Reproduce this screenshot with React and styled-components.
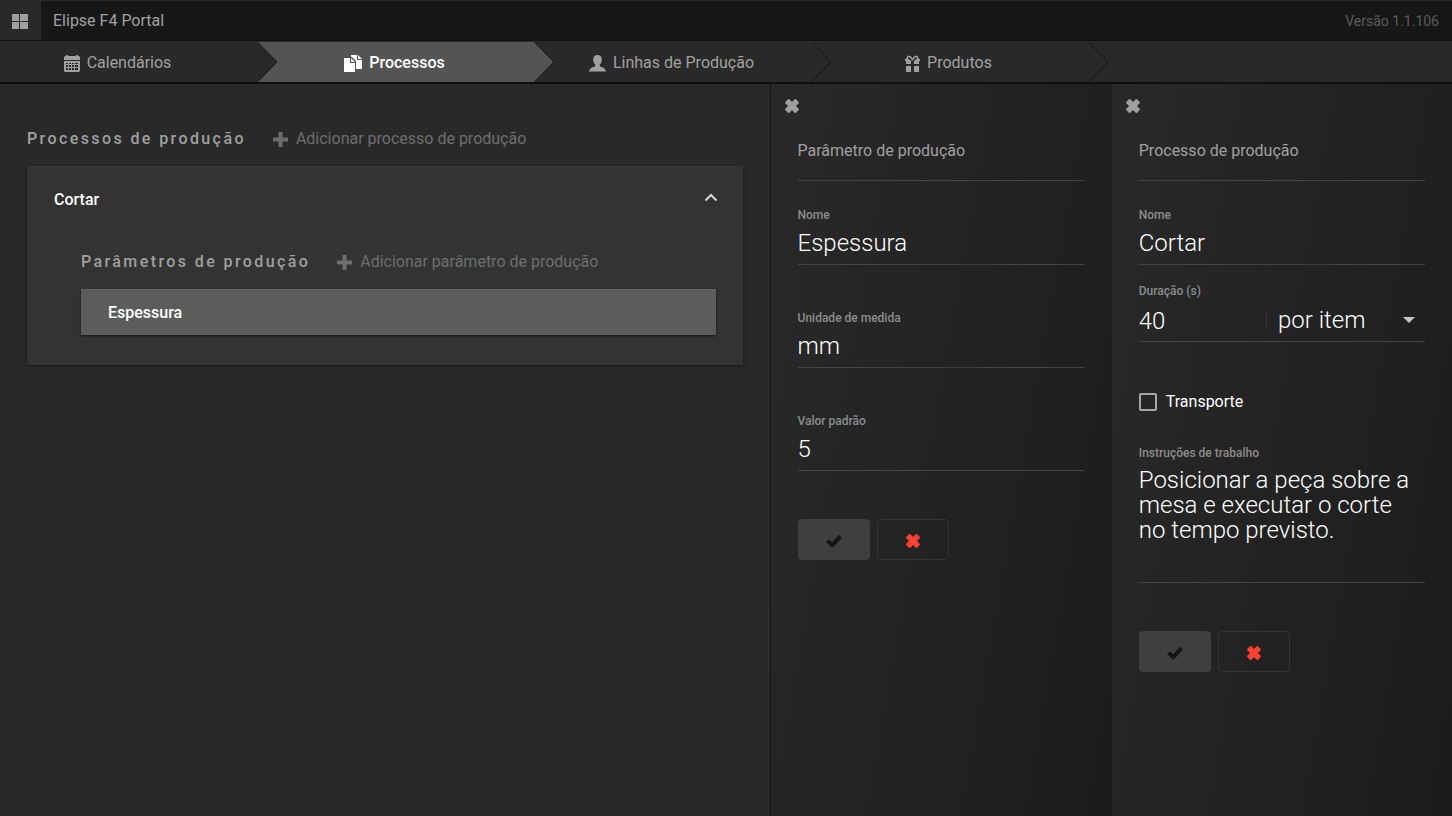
import { useState } from "react";
import styled, { createGlobalStyle } from "styled-components";

const GlobalStyle = createGlobalStyle`
  *,
  *::before,
  *::after {
    box-sizing: border-box;
  }

  body {
    margin: 0;
    background: #292929;
    color: #a0a0a0;
    font-family: Roboto, "Liberation Sans", sans-serif;
    font-size: 16px;
    line-height: 24px;
  }

  button,
  input,
  select,
  textarea {
    font-family: inherit;
    color: inherit;
    margin: 0;
    padding: 0;
    border: 0;
    border-radius: 0;
    background: none;
    outline: none;
  }

  button {
    cursor: pointer;
  }
`;

const Page = styled.div`
  display: flex;
  flex-direction: column;
  min-height: 100vh;
`;

const TopBar = styled.header`
  display: flex;
  align-items: center;
  height: 41px;
  background: #171717;
  border-top: 1px solid #2a2a2a;
  border-bottom: 1px solid #0e0e0e;

  h1 {
    flex: 1;
    margin: 0 0 0 12px;
    font-size: 16px;
    font-weight: 400;
  }
`;

const MenuButton = styled.button`
  display: flex;
  align-items: center;
  justify-content: center;
  align-self: stretch;
  width: 41px;
  padding: 2px 2px 0 0;
  background: #292929;
  color: #a0a0a0;
`;

const Version = styled.span`
  margin-right: 13px;
  color: #5c5c5c;
  font-size: 14px;
`;

const Nav = styled.nav`
  display: flex;
  height: 43px;
  padding-right: 20px;
  overflow: hidden;
  background: #292929;
  border-top: 1px solid #2e2e2e;
  border-bottom: 2px solid #0e0e0e;
`;

const Tab = styled.a`
  position: relative;
  display: flex;
  flex: 0 0 277px;
  align-items: center;
  justify-content: center;
  gap: 7px;
  padding: 2px 2px 0 0;
  background: ${({ $active }) => ($active ? "#545454" : "#292929")};
  color: ${({ $active }) => ($active ? "#ffffff" : "#a0a0a0")};
  font-weight: ${({ $active }) => ($active ? 500 : 400)};
  text-decoration: none;

  &:first-child {
    margin-left: -20px;
  }
`;

const Arrow = styled.svg`
  position: absolute;
  z-index: 1;
  top: 0;
  left: 100%;
  fill: ${({ $active }) => ($active ? "#545454" : "#292929")};
  stroke: #141414;
`;

const Main = styled.main`
  display: grid;
  flex: 1;
  grid-template-columns: 106fr 47fr 47fr;
`;

const Processes = styled.section`
  padding: 43px 27px 27px;
`;

const ListHeader = styled.div`
  display: flex;
  align-items: center;
  gap: 27px;
  margin-bottom: 15px;

  h2 {
    margin: 0;
    font-size: 16px;
    font-weight: 500;
    letter-spacing: 0.15em;
  }
`;

const AddButton = styled.button`
  display: flex;
  align-items: center;
  gap: 8px;
  color: #6e6e6e;
  font-size: 16px;
  line-height: 24px;
`;

const Card = styled.article`
  background: #333333;
  border-top: 1px solid #393939;
  box-shadow: 0 1px 2px #151515;
`;

const CardHeader = styled.button`
  display: flex;
  align-items: center;
  justify-content: space-between;
  width: 100%;
  height: 64px;
  padding: 0 25px 0 27px;
  color: #ffffff;
  font-size: 16px;
  font-weight: 500;
`;

const Parameters = styled.div`
  padding: 19px 27px 30px 54px;
`;

const ParameterRow = styled.button`
  display: block;
  width: 100%;
  height: 46px;
  padding: 0 27px;
  background: #5c5c5c;
  border-top: 1px solid #646464;
  box-shadow: 0 1px 2px #151515;
  color: #ffffff;
  font-size: 16px;
  font-weight: 500;
  text-align: left;
`;

const Panel = styled.form`
  min-width: 0;
  padding: 15px 27px 27px;
  background: linear-gradient(100deg, #292929, #1c1c1c);
  border-left: 1px solid ${({ $divided }) => ($divided ? "#141414" : "transparent")};

  h2 {
    margin: 26px 0;
    padding-bottom: 17px;
    border-bottom: 1px solid #444444;
    font-size: 16px;
    font-weight: 400;
  }
`;

const CloseButton = styled.button`
  display: block;
  margin-left: -13px;
  color: #a0a0a0;
  line-height: 0;
`;

const Field = styled.div`
  display: flex;
  flex-direction: column;
  margin-bottom: ${({ $gap }) => $gap || 45}px;

  label {
    color: #8c8c8c;
    font-size: 12px;
    font-weight: 500;
    line-height: 16px;
  }
`;

const TextInput = styled.input`
  width: 100%;
  min-width: 0;
  height: 42px;
  padding-bottom: 1px;
  border-bottom: 1px solid #444444;
  color: #ffffff;
  font-size: 24px;
  font-weight: 300;
`;

const TextArea = styled.textarea`
  height: 122px;
  padding: 7px 8px 0 0;
  border-bottom: 1px solid #444444;
  color: #ffffff;
  font-size: 24px;
  font-weight: 300;
  line-height: 25px;
  resize: none;
  overflow: hidden;
`;

const Duration = styled.div`
  display: grid;
  grid-template-columns: 4fr 5fr;
  align-items: center;
  height: 43px;
  padding-top: 2px;
  border-bottom: 1px solid #444444;

  ${TextInput} {
    height: 40px;
    border-bottom: 0;
  }
`;

const UnitSelect = styled.div`
  position: relative;
  height: 20px;
  border-left: 1px solid #333333;

  select {
    width: 100%;
    height: 32px;
    margin-top: -7px;
    padding-left: 11px;
    appearance: none;
    color: #ffffff;
    font-size: 24px;
    font-weight: 300;
  }

  option {
    background: #292929;
  }

  svg {
    position: absolute;
    top: 6px;
    right: 10px;
    pointer-events: none;
  }
`;

const Checkbox = styled.label`
  display: flex;
  align-items: center;
  gap: 9px;
  margin-bottom: 31px;
  color: #ffffff;

  input {
    width: 18px;
    height: 18px;
    appearance: none;
    border: 2px solid #a6a6a6;
    border-radius: 2px;
  }

  input:checked {
    background: #a6a6a6;
  }
`;

const Actions = styled.div`
  display: flex;
  gap: 7px;
  margin-top: 48px;
`;

const ActionButton = styled.button`
  display: flex;
  align-items: center;
  justify-content: center;
  width: 72px;
  height: 41px;
  padding-top: 3px;
  background: ${({ $filled }) => ($filled ? "#3f3f3f" : "transparent")};
  border: 1px solid ${({ $filled }) => ($filled ? "#3f3f3f" : "#343434")};
  border-radius: 4px;
  color: ${({ $filled }) => ($filled ? "#141414" : "#ff4032")};
`;

const GridIcon = () => (
  <svg width="16" height="16" fill="currentColor" aria-hidden="true">
    <path d="M0 0h7v7H0zM8 0h8v7H8zM0 8h7v7H0zM8 8h8v7H8z" />
  </svg>
);

const CalendarIcon = () => (
  <svg width="16" height="17" viewBox="0 0 16 17" fill="currentColor" aria-hidden="true">
    <path d="M1 1h1V0h2v1h8V0h2v1h1l1 1v3H0V2z" />
    <path
      fillRule="evenodd"
      d="M0 6h16v10l-1 1H1l-1-1zM2 8v1h2V8zM5 8v1h2V8zM8 8v1h2V8zM11 8v1h3V8zM2 10v2h2v-2zM5 10v2h2v-2zM8 10v2h2v-2zM11 10v2h3v-2zM2 13v2h2v-2zM5 13v2h2v-2zM8 13v2h2v-2zM11 13v2h3v-2z"
    />
  </svg>
);

const FilesIcon = () => (
  <svg width="18" height="17" viewBox="0 0 18 17" fill="currentColor" aria-hidden="true">
    <path d="M0 3h6v5h5v9H0z" />
    <path d="M7 3l4 4H7z" />
    <path d="M7 0h6v5h5v9h-6V6L8 2H7z" />
    <path d="M14 0l4 4h-4z" />
  </svg>
);

const UserIcon = () => (
  <svg width="17" height="17" viewBox="0 0 17 17" fill="currentColor" aria-hidden="true">
    <path d="M8.500 0C11 0 12.800 1.500 12.800 4.200c0 2.300-.8 4.300-2 5.400v1.600c2.700 1 5.700 2 6.200 5.300H0c.5-3.300 3.500-4.300 6.200-5.300V9.600c-1.200-1.100-2-3.100-2-5.400C4.200 1.500 6 0 8.500 0z" />
  </svg>
);

const GiftIcon = () => (
  <svg width="15" height="17" viewBox="0 0 15 17" fill="currentColor" aria-hidden="true">
    <path d="M0 4h3l2 1.500h5L12 4h3v2h-1v3H9V6.500L7.500 5 6 6.500V9H1V6H0zM1 11h5v6H1zM9 11h5v6H9z" />
    <path
      d="M7.500 4.500L5 1.500H3L2 3.500 4 5M7.500 4.500L10 1.500h2l1 2L11 5"
      fill="none"
      stroke="currentColor"
      strokeWidth="1.500"
    />
  </svg>
);

const PlusIcon = () => (
  <svg width="15" height="15" viewBox="0 0 15 15" fill="currentColor" aria-hidden="true">
    <path d="M5.500 0h4v5.500H15v4H9.500V15h-4V9.500H0v-4h5.500z" />
  </svg>
);

const CrossIcon = () => (
  <svg width="14" height="14" viewBox="0 0 14 14" fill="currentColor" aria-hidden="true">
    <g transform="rotate(45 7 7)">
      <rect x="-.6" y="4.200" width="15.200" height="5.600" rx="1" />
      <rect x="4.200" y="-.6" width="5.600" height="15.200" rx="1" />
    </g>
  </svg>
);

const CheckIcon = () => (
  <svg width="16" height="14" viewBox="0 0 16 14" fill="currentColor" aria-hidden="true">
    <path d="M0 8.300L2.800 5.400 6.300 8.200 12.900 .8 16 3.700 7.100 13.300H5.600z" />
  </svg>
);

const ChevronUpIcon = () => (
  <svg width="14" height="14" viewBox="0 0 14 14" fill="none" aria-hidden="true">
    <path d="M1.500 8.500L7 3l5.500 5.500" stroke="#d6d6d6" strokeWidth="2" />
  </svg>
);

const CaretIcon = () => (
  <svg width="12" height="6" fill="#c4c4c4" aria-hidden="true">
    <path d="M0 0h12L6 6z" />
  </svg>
);

const tabs = [
  { name: "Calendários", icon: CalendarIcon },
  { name: "Processos", icon: FilesIcon },
  { name: "Linhas de Produção", icon: UserIcon },
  { name: "Produtos", icon: GiftIcon },
];

const FormActions = () => (
  <Actions>
    <ActionButton type="button" $filled aria-label="Salvar">
      <CheckIcon />
    </ActionButton>
    <ActionButton type="button" aria-label="Cancelar">
      <CrossIcon />
    </ActionButton>
  </Actions>
);

const App = () => {
  const [activeTab, setActiveTab] = useState("Processos");

  return (
    <Page>
      <GlobalStyle />
      <TopBar>
        <MenuButton type="button" aria-label="Menu">
          <GridIcon />
        </MenuButton>
        <h1>Elipse F4 Portal</h1>
        <Version>Versão 1.1.106</Version>
      </TopBar>

      <Nav>
        {tabs.map(({ name, icon: Icon }) => (
          <Tab
            key={name}
            href="#"
            $active={name === activeTab}
            onClick={() => setActiveTab(name)}
          >
            <Icon />
            {name}
            <Arrow
              $active={name === activeTab}
              width="21"
              height="40"
              viewBox="0 0 21 40"
              aria-hidden="true"
            >
              <path d="M0 -.5L20 20L0 40.500" />
            </Arrow>
          </Tab>
        ))}
      </Nav>

      <Main>
        <Processes>
          <ListHeader>
            <h2>Processos de produção</h2>
            <AddButton type="button">
              <PlusIcon />
              Adicionar processo de produção
            </AddButton>
          </ListHeader>
          <Card>
            <CardHeader type="button" aria-expanded="true">
              Cortar
              <ChevronUpIcon />
            </CardHeader>
            <Parameters>
              <ListHeader>
                <h2>Parâmetros de produção</h2>
                <AddButton type="button">
                  <PlusIcon />
                  Adicionar parâmetro de produção
                </AddButton>
              </ListHeader>
              <ParameterRow type="button">Espessura</ParameterRow>
            </Parameters>
          </Card>
        </Processes>

        <Panel $divided>
          <CloseButton type="button" aria-label="Fechar">
            <CrossIcon />
          </CloseButton>
          <h2>Parâmetro de produção</h2>
          <Field>
            <label htmlFor="parameter-name">Nome</label>
            <TextInput id="parameter-name" defaultValue="Espessura" />
          </Field>
          <Field>
            <label htmlFor="parameter-unit">Unidade de medida</label>
            <TextInput id="parameter-unit" defaultValue="mm" />
          </Field>
          <Field $gap={48}>
            <label htmlFor="parameter-default">Valor padrão</label>
            <TextInput id="parameter-default" defaultValue="5" />
          </Field>
          <FormActions />
        </Panel>

        <Panel>
          <CloseButton type="button" aria-label="Fechar">
            <CrossIcon />
          </CloseButton>
          <h2>Processo de produção</h2>
          <Field $gap={18}>
            <label htmlFor="process-name">Nome</label>
            <TextInput id="process-name" defaultValue="Cortar" />
          </Field>
          <Field $gap={48}>
            <label htmlFor="process-duration">Duração (s)</label>
            <Duration>
              <TextInput id="process-duration" defaultValue="40" />
              <UnitSelect>
                <select aria-label="Unidade da duração" defaultValue="item">
                  <option value="item">por item</option>
                </select>
                <CaretIcon />
              </UnitSelect>
            </Duration>
          </Field>
          <Checkbox>
            <input type="checkbox" />
            Transporte
          </Checkbox>
          <Field $gap={48}>
            <label htmlFor="process-instructions">Instruções de trabalho</label>
            <TextArea
              id="process-instructions"
              defaultValue="Posicionar a peça sobre a mesa e executar o corte no tempo previsto."
            />
          </Field>
          <FormActions />
        </Panel>
      </Main>
    </Page>
  );
};

export default App;
